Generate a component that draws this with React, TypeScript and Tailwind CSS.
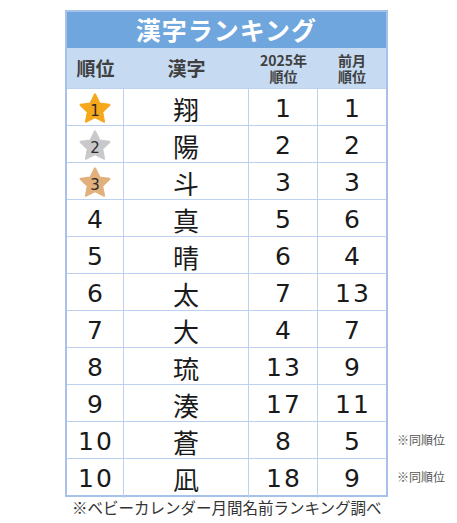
import React from 'react';

type Row = { rank: number; kanji: string; y2025: number; prev: number; note?: string };

const rows: Row[] = [
  { rank: 1, kanji: '翔', y2025: 1, prev: 1 },
  { rank: 2, kanji: '陽', y2025: 2, prev: 2 },
  { rank: 3, kanji: '斗', y2025: 3, prev: 3 },
  { rank: 4, kanji: '真', y2025: 5, prev: 6 },
  { rank: 5, kanji: '晴', y2025: 6, prev: 4 },
  { rank: 6, kanji: '太', y2025: 7, prev: 13 },
  { rank: 7, kanji: '大', y2025: 4, prev: 7 },
  { rank: 8, kanji: '琉', y2025: 13, prev: 9 },
  { rank: 9, kanji: '湊', y2025: 17, prev: 11 },
  { rank: 10, kanji: '蒼', y2025: 8, prev: 5, note: '※同順位' },
  { rank: 10, kanji: '凪', y2025: 18, prev: 9, note: '※同順位' },
];

const starColors: Record<number, string> = { 1: '#f6a81c', 2: '#c9c9cb', 3: '#e2b07c' };

const jp = { fontFamily: '"Noto Sans CJK JP", sans-serif' };

const Star = ({ n }: { n: number }) => (
  <div className="relative w-[34px] h-[34px] flex items-center justify-center">
    <svg viewBox="0 0 24 24" className="absolute inset-0 w-full h-full">
      <path
        d="M12 1.8l3.1 6.4 7 .9-5.1 4.9 1.3 6.9L12 17.6l-6.3 3.3 1.3-6.9L1.9 9.1l7-.9z"
        fill={starColors[n]}
        stroke={starColors[n]}
        strokeWidth="1.6"
        strokeLinejoin="round"
      />
    </svg>
    <span className="relative mt-[5px] text-[15px] leading-none text-[#2a2a2a]">{n}</span>
  </div>
);

const cell = 'flex items-center justify-center border-[#bcd0f0]';
const num = 'tracking-[2px] pl-[2px]';

const App = () => {
  return (
    <div className="w-[457px] h-[523px] bg-white relative" style={{ fontFamily: '"DejaVu Sans", "Noto Sans CJK JP", sans-serif' }}>
      <div className="absolute left-[65px] top-[10px] w-[323px] border-2 border-[#a6c2ea]">
        <div className="h-[36px] bg-[#6fa6de] flex items-center justify-center text-white font-bold text-[25px] tracking-[1px]" style={jp}>
          漢字ランキング
        </div>
        <div className="grid grid-cols-[57px_125px_69px_68px] bg-[#c6daf2] h-[40px] text-[#404040] font-bold" style={jp}>
          <div className={`${cell} text-[19px]`}>順位</div>
          <div className={`${cell} text-[19px]`}>漢字</div>
          <div className={`${cell} text-center whitespace-pre-line text-[14px] leading-[16px]`}>{'2025年\n順位'}</div>
          <div className={`${cell} text-center whitespace-pre-line text-[14px] leading-[16px]`}>{'前月\n順位'}</div>
        </div>
        {rows.map((r, i) => (
          <div key={i} className="relative grid grid-cols-[57px_125px_69px_68px] h-[37px] border-t border-[#bcd0f0] text-[25px] text-[#1a1a1a]">
            <div className={`${cell} border-r ${r.rank > 3 ? num : ''}`}>{r.rank <= 3 ? <Star n={r.rank} /> : r.rank}</div>
            <div className={`${cell} border-r text-[26px]`} style={jp}>
              {r.kanji}
            </div>
            <div className={`${cell} border-r ${num}`}>{r.y2025}</div>
            <div className={`${cell} ${num}`}>{r.prev}</div>
            {r.note && (
              <div className="absolute left-[330px] top-[9px] w-[60px] text-[12px] text-[#555]" style={jp}>
                {r.note}
              </div>
            )}
          </div>
        ))}
      </div>
      <div className="absolute left-[72px] top-[496px] text-[15.5px] text-[#333]" style={jp}>
        ※ベビーカレンダー月間名前ランキング調べ
      </div>
    </div>
  );
};

export default App;
